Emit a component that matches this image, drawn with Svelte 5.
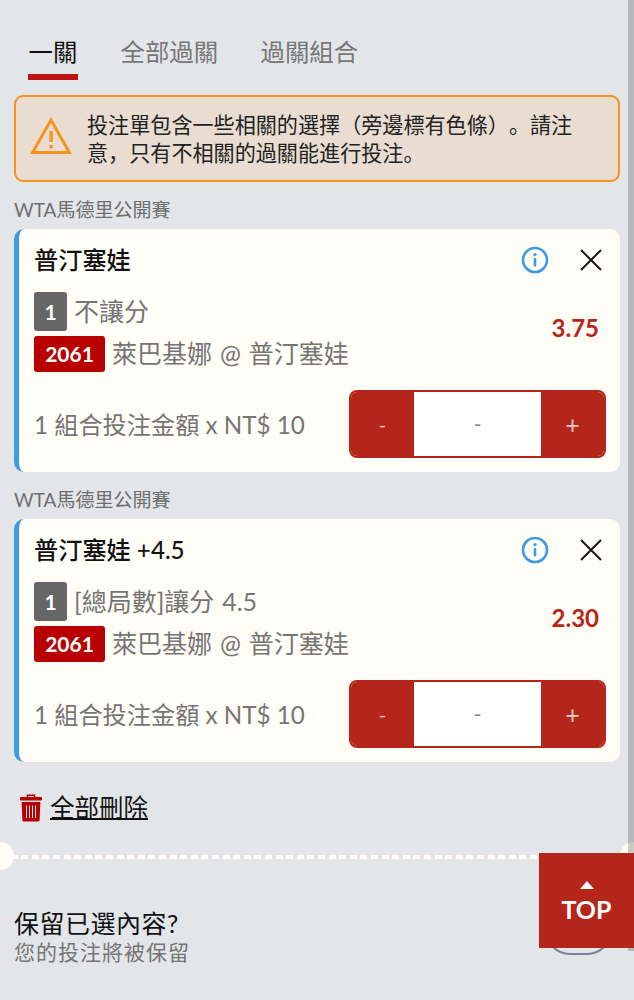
<script>
    const tabs = ["一關", "全部過關", "過關組合"];
    const bets = [
        { title: "普汀塞娃", market: "不讓分", odds: "3.75" },
        { title: "普汀塞娃 +4.5", market: "[總局數]讓分 4.5", odds: "2.30" },
    ];
</script>

<div class="page">
    <div class="tabs">
        {#each tabs as tab, i}
            <div class="tab" class:active={i === 0}>{tab}</div>
        {/each}
    </div>

    <div class="alert">
        <svg class="warn" width="44" height="40" viewBox="0 0 44 40" fill="none">
            <path d="M22 3 L40.4 35.5 H3.6 Z" stroke="#f7931e" stroke-width="3" stroke-linejoin="miter" />
            <rect x="20.4" y="14" width="3.4" height="11" fill="#f7931e" />
            <rect x="20.4" y="28" width="3.4" height="3.4" fill="#f7931e" />
        </svg>
        <p>投注單包含一些相關的選擇（旁邊標有色條）。請注意，只有不相關的過關能進行投注。</p>
    </div>

    {#each bets as bet}
        <div class="league">WTA馬德里公開賽</div>
        <div class="card">
            <div class="head">
                <div class="title">{bet.title}</div>
                <svg class="info" width="28" height="28" viewBox="0 0 28 28" fill="none">
                    <circle cx="14" cy="14" r="12" stroke="#3d9be0" stroke-width="2.6" />
                    <circle cx="14" cy="8.6" r="1.7" fill="#3d9be0" />
                    <rect x="12.7" y="12" width="2.6" height="8.6" rx="1" fill="#3d9be0" />
                </svg>
                <svg class="close" width="24" height="24" viewBox="0 0 24 24" fill="none">
                    <path d="M2 2 L22 22 M22 2 L2 22" stroke="#161616" stroke-width="2" />
                </svg>
            </div>
            <div class="body">
                <div class="lines">
                    <div class="line">
                        <span class="num">1</span>
                        <span class="text">{bet.market}</span>
                    </div>
                    <div class="line second">
                        <span class="code">2061</span>
                        <span class="text">萊巴基娜 @ 普汀塞娃</span>
                    </div>
                </div>
                <div class="odds">{bet.odds}</div>
            </div>
            <div class="foot">
                <div class="amount">1 組合投注金額 x NT$ 10</div>
                <div class="stepper">
                    <div class="step">-</div>
                    <div class="value">-</div>
                    <div class="step plus">+</div>
                </div>
            </div>
        </div>
    {/each}

    <div class="delete">
        <svg width="22" height="28" viewBox="0 0 22 28">
            <path d="M7.5 3.5 V1.2 H14.5 V3.5" fill="none" stroke="#b80000" stroke-width="1.6" />
            <rect x="0" y="3" width="22" height="3.4" rx="1" fill="#b80000" />
            <path d="M1.6 8 H20.4 L19.6 26 Q19.5 27.6 18 27.6 H4 Q2.5 27.6 2.4 26 Z" fill="#b80000" />
            <path d="M6.5 11.5 V24 M9.5 11.5 V24 M12.5 11.5 V24 M15.5 11.5 V24" stroke="#e3e5e8" stroke-width="1" />
        </svg>
        <span>全部刪除</span>
    </div>

    <div class="divider"></div>

    <div class="keep">
        <div class="keep-title">保留已選內容?</div>
        <div class="keep-sub">您的投注將被保留</div>
    </div>

    <div class="hole left"></div>
    <div class="hole right"></div>
    <div class="toggle"></div>
    <div class="scrollbar"></div>
    <div class="top">
        <svg width="14" height="8" viewBox="0 0 14 8"><path d="M7 0 L14 8 H0 Z" fill="#fff" /></svg>
        <span>TOP</span>
    </div>
</div>

<style>
    :global(body) {
        margin: 0;
        background: #e3e5e8;
    }

    .page {
        position: relative;
        height: 1000px;
        overflow: hidden;
        box-sizing: border-box;
        padding: 34px 14px 0;
        background: #e3e5e8;
        font-family: Lato, "Noto Sans CJK SC", sans-serif;
        text-spacing-trim: space-all;
    }

    .tabs {
        display: flex;
        gap: 42.5px;
        padding-left: 14px;
    }

    .tab {
        box-sizing: border-box;
        height: 46px;
        font-size: 24.4px;
        line-height: 36px;
        color: #777;
    }

    .tab.active {
        width: 50px;
        text-align: center;
        color: #111;
        border-bottom: 6px solid #bd1313;
    }

    .alert {
        display: flex;
        align-items: center;
        gap: 14px;
        box-sizing: border-box;
        height: 87px;
        margin-top: 15px;
        padding: 0 30px 0 13px;
        background: #e9ddd1;
        border: 2px solid #f7931e;
        border-radius: 9px;
    }

    .warn {
        flex: none;
        margin-bottom: 3px;
    }

    .alert p {
        margin: 0;
        font-size: 21.1px;
        line-height: 28px;
        color: #222;
    }

    .league {
        margin-top: 15px;
        font-size: 19px;
        line-height: 26px;
        color: #6e6e6e;
    }

    .card {
        box-sizing: border-box;
        height: 243px;
        margin-top: 6px;
        padding: 11px 14px 0 15px;
        background: #fffdf5;
        border-left: 5px solid #3d9be0;
        border-radius: 10px;
    }

    .head {
        display: flex;
        align-items: center;
        height: 36px;
    }

    .title {
        flex: 1;
        padding-top: 1px;
        font-size: 24.2px;
        font-weight: 500;
        color: #111;
    }

    .info {
        margin: 3px 30px 0 0;
    }

    .close {
        margin: 3px 3px 0 0;
    }

    .body {
        display: flex;
        align-items: center;
        margin-top: 16px;
    }

    .lines {
        flex: 1;
    }

    .line {
        display: flex;
        align-items: center;
        gap: 7px;
        height: 39px;
    }

    .line.second {
        height: 36px;
        margin-top: 5px;
    }

    .text {
        padding-bottom: 4px;
        font-size: 25px;
        word-spacing: 1.5px;
        color: #757575;
    }

    .num {
        width: 33px;
        height: 39px;
        line-height: 39px;
        text-align: center;
        border-radius: 3px;
        background: #666;
        color: #fff;
        font-size: 21px;
        font-weight: 700;
    }

    .code {
        width: 71px;
        height: 36px;
        line-height: 36px;
        text-align: center;
        border-radius: 3px;
        background: #b80000;
        color: #fff;
        font-size: 21px;
        font-weight: 700;
    }

    .odds {
        margin-right: 7px;
        margin-bottom: 10px;
        font-size: 24px;
        font-weight: 700;
        color: #b5261a;
    }

    .foot {
        display: flex;
        align-items: center;
        justify-content: space-between;
        margin-top: 18px;
    }

    .amount {
        padding-bottom: 2px;
        font-size: 24.2px;
        color: #757575;
    }

    .stepper {
        display: flex;
        box-sizing: border-box;
        width: 257px;
        height: 68px;
        border: 2px solid #b5261a;
        border-radius: 8px;
        background: #fff;
        overflow: hidden;
    }

    .step {
        width: 63px;
        background: #b5261a;
        color: #e9c9c5;
        font-size: 20px;
        line-height: 64px;
        text-align: center;
    }

    .step.plus {
        font-size: 25px;
    }

    .value {
        flex: 1;
        color: #888;
        font-size: 22px;
        line-height: 64px;
        text-align: center;
    }

    .delete {
        display: flex;
        align-items: center;
        gap: 8px;
        height: 28px;
        margin-top: 32px;
        padding-left: 6px;
    }

    .delete span {
        font-size: 24.5px;
        line-height: 30px;
        color: #111;
        text-decoration: underline;
        text-decoration-thickness: 2px;
    }

    .divider {
        height: 4px;
        margin: 33px -14px 0;
        background: repeating-linear-gradient(90deg, #fffdf5 0 7px, transparent 7px 10.6px);
    }

    .keep {
        margin-top: 49px;
    }

    .keep-title {
        font-size: 25px;
        line-height: 30px;
        letter-spacing: 0.5px;
        color: #111;
    }

    .keep-sub {
        font-size: 21px;
        line-height: 28px;
        letter-spacing: 1px;
        color: #757575;
    }

    .hole {
        position: absolute;
        top: 842px;
        width: 28px;
        height: 28px;
        border-radius: 50%;
        background: #fffdf5;
    }

    .hole.left {
        left: -14px;
    }

    .hole.right {
        right: -14px;
    }

    .toggle {
        position: absolute;
        left: 545px;
        top: 905px;
        width: 67px;
        height: 50px;
        box-sizing: border-box;
        border: 2px solid #7a7fa8;
        border-radius: 25px;
    }

    .toggle::after {
        content: "";
        position: absolute;
        left: 4px;
        top: 9px;
        width: 32px;
        height: 32px;
        border-radius: 50%;
        background: #666;
    }

    .scrollbar {
        position: absolute;
        right: 0;
        top: 0;
        width: 6px;
        height: 951px;
        background: rgba(0, 0, 0, 0.2);
    }

    .top {
        position: absolute;
        left: 539px;
        top: 853px;
        width: 95px;
        height: 95px;
        box-sizing: border-box;
        padding-top: 28px;
        display: flex;
        flex-direction: column;
        align-items: center;
        background: #b5261a;
        color: #fff;
        font-size: 25px;
        font-weight: 700;
        line-height: 32px;
    }

    .top svg {
        margin-bottom: 4px;
    }
</style>
